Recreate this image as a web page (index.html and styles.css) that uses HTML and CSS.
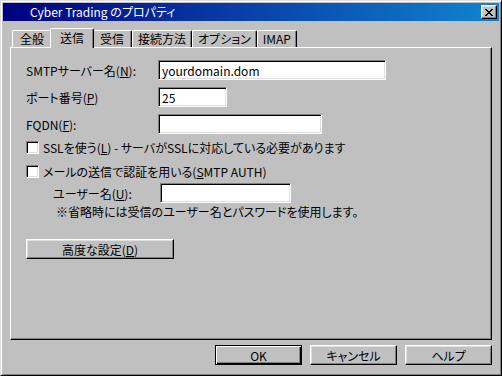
FILE: index.html
```html
<!DOCTYPE html>
<html lang="ja">
<head>
  <meta charset="UTF-8">
  <title>Cyber Trading のプロパティ</title>
  <link rel="stylesheet" href="styles.css">
</head>
<body>
  <div class="window">
    <div class="titlebar">
      <span class="title">Cyber Trading のプロパティ</span>
      <button class="close-btn">
        <svg width="8" height="7" viewBox="0 0 8 7">
          <path d="M0 0h2v1h1v1h2v-1h1v-1h2v1h-1v1h-1v1h-1v1h1v1h1v1h1v1h-2v-1h-1v-1h-2v1h-1v1h-2v-1h1v-1h1v-1h1v-1h-1v-1h-1v-1h-1z" fill="#000"/>
        </svg>
      </button>
    </div>

    <div class="dialog">
      <!-- タブ -->
      <div class="tabs">
        <div class="tab">全般</div>
        <div class="tab active">送信</div>
        <div class="tab">受信</div>
        <div class="tab">接続方法</div>
        <div class="tab">オプション</div>
        <div class="tab">IMAP</div>
      </div>

      <div class="panel">
        <div class="field-row">
          <label class="label">SMTPサーバー名(<u>N</u>):</label>
          <input class="text-input smtp" type="text" value="yourdomain.dom">
        </div>
        <div class="field-row">
          <label class="label">ポート番号(<u>P</u>)</label>
          <input class="text-input port" type="text" value="25">
        </div>
        <div class="field-row">
          <label class="label">FQDN(<u>F</u>):</label>
          <input class="text-input fqdn" type="text" value="">
        </div>

        <div class="check-row ssl">
          <span class="checkbox"></span>
          <span>SSLを使う(<u>L</u>) - サーバがSSLに対応している必要があります</span>
        </div>
        <div class="check-row auth">
          <span class="checkbox"></span>
          <span>メールの送信で認証を用いる(<u>S</u>MTP AUTH)</span>
        </div>

        <div class="user-row">
          <label class="user-label">ユーザー名(<u>U</u>):</label>
          <input class="text-input user" type="text" value="">
        </div>
        <div class="note">※省略時には受信のユーザー名とパスワードを使用します。</div>

        <button class="btn advanced">高度な設定(<u>D</u>)</button>
      </div>

      <div class="actions">
        <button class="btn default">OK</button>
        <button class="btn">キャンセル</button>
        <button class="btn">ヘルプ</button>
      </div>
    </div>
  </div>
</body>
</html>
```

FILE: styles.css
```css
* {
  box-sizing: border-box;
}
body {
  margin: 0;
  background: #c0c0c0;
  font-family: "Noto Sans CJK JP", "Noto Sans", sans-serif;
  font-size: 12px;
  font-feature-settings: "palt";
  color: #000;
}
u {
  text-decoration: underline;
  text-underline-offset: 1px;
}

/* ウィンドウ枠 */
.window {
  width: 502px;
  height: 376px;
  padding: 2px;
  background: #c0c0c0;
  border: 1px solid;
  border-color: #dfdfdf #000 #000 #dfdfdf;
  box-shadow: inset 1px 1px #fff, inset -1px -1px #808080;
}
.titlebar {
  height: 18px;
  display: flex;
  align-items: center;
  padding: 0 2px 0 27px;
  background: linear-gradient(to right, #000080, #1084d0);
  color: #fff;
}
.title {
  line-height: 16px;
}
.close-btn {
  margin-left: auto;
  width: 16px;
  height: 14px;
  padding: 0;
  display: flex;
  align-items: center;
  justify-content: center;
  background: #c0c0c0;
  border: 1px solid;
  border-color: #fff #000 #000 #fff;
  box-shadow: inset -1px -1px #808080, inset 1px 1px #dfdfdf;
}

.dialog {
  padding: 7px 7px 0;
}

/* タブ */
.tabs {
  display: flex;
  align-items: flex-end;
  height: 19px;
  padding-left: 2px;
}
.tab {
  height: 17px;
  min-width: 40px;
  padding: 0 5px 1px;
  display: flex;
  align-items: center;
  justify-content: center;
  border-top: 1px solid #fff;
  border-left: 1px solid #fff;
  border-right: 1px solid #000;
  border-radius: 2px 2px 0 0;
  box-shadow: inset -1px 0 #808080;
  background: #c0c0c0;
}
.tab.active {
  position: relative;
  z-index: 1;
  height: 20px;
  min-width: 44px;
  margin: 0 -2px -1px;
  padding-bottom: 3px;
}

/* パネル */
.panel {
  height: 293px;
  padding: 12px 15px 0;
  border: 1px solid;
  border-color: #fff #000 #000 #fff;
  box-shadow: inset -1px -1px #808080;
}
.field-row {
  display: flex;
  align-items: center;
  height: 20px;
  margin-bottom: 7px;
}
.label {
  width: 132px;
}
.text-input {
  height: 20px;
  padding: 0 3px;
  font: inherit;
  font-feature-settings: "palt";
  color: #000;
  background: #fff;
  border: 1px solid;
  border-color: #808080 #fff #fff #808080;
  box-shadow: inset 1px 1px #000, inset -1px -1px #dfdfdf;
  outline: none;
}
.smtp { width: 228px; }
.port { width: 69px; }
.fqdn { width: 164px; }
.user { width: 131px; }

.check-row {
  display: flex;
  align-items: center;
  height: 13px;
  gap: 4px;
}
.check-row.ssl {
  margin-top: 6px;
}
.check-row.auth {
  margin-top: 11px;
}
.checkbox {
  width: 13px;
  height: 13px;
  flex: none;
  background: #fff;
  border: 1px solid;
  border-color: #808080 #fff #fff #808080;
  box-shadow: inset 1px 1px #000, inset -1px -1px #dfdfdf;
}

.user-row {
  display: flex;
  align-items: center;
  height: 20px;
  margin-top: 5px;
  padding-left: 27px;
}
.user-label {
  width: 107px;
}
.note {
  margin-top: 2px;
  padding-left: 30px;
  line-height: 14px;
}

/* ボタン */
.btn {
  height: 20px;
  padding: 0;
  font: inherit;
  font-feature-settings: "palt";
  color: #000;
  background: #c0c0c0;
  border: 1px solid;
  border-color: #fff #000 #000 #fff;
  box-shadow: inset -1px -1px #808080, inset 1px 1px #dfdfdf;
}
.advanced {
  width: 148px;
  margin-top: 20px;
}
.actions {
  display: flex;
  justify-content: flex-end;
  gap: 8px;
  margin-top: 5px;
}
.actions .btn {
  width: 87px;
}
.btn.default {
  border-color: #000;
  box-shadow: inset 1px 1px #fff, inset -1px -1px #000, inset -2px -2px #808080;
}
```
